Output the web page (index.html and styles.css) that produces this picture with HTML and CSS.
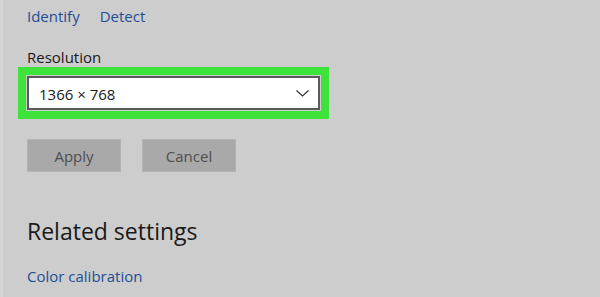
FILE: index.html
```html
<!DOCTYPE html>
<html lang="en">
<head>
  <meta charset="UTF-8">
  <meta name="viewport" content="width=device-width, initial-scale=1.0">
  <link rel="stylesheet" href="styles.css">
  <title>Display settings</title>
</head>
<body>
  <div class="panel">
    <div class="links">
      <a href="#">Identify</a>
      <a href="#">Detect</a>
    </div>

    <p class="label">Resolution</p>
    <div class="select">
      <span>1366 × 768</span>
      <svg class="chevron" width="13" height="7" viewBox="0 0 13 7">
        <polyline points="0.5,0.5 6.5,6 12.5,0.5" fill="none" stroke="#333" stroke-width="1.2"/>
      </svg>
    </div>

    <div class="actions">
      <button class="btn">Apply</button>
      <button class="btn">Cancel</button>
    </div>

    <h2 class="heading">Related settings</h2>
    <a class="related" href="#">Color calibration</a>
  </div>
</body>
</html>
```

FILE: styles.css
```css
body {
  margin: 0;
  background: #cdcdcd;
  font-family: "Open Sans", "Noto Sans", sans-serif;
  color: #1a1a1a;
  height: 297px;
  overflow: hidden;
}
.panel {
  border-left: 3px solid #d5d5d5;
  padding: 6px 0 0 24px;
  height: 291px;
}
a {
  color: #1f4d96;
  text-decoration: none;
}
.links {
  display: flex;
  gap: 20px;
  font-size: 15px;
  line-height: 20px;
}
.label {
  margin: 21px 0 0;
  font-size: 15px;
  line-height: 20px;
}
.select {
  margin-top: 9px;
  width: 293px;
  height: 34px;
  box-sizing: border-box;
  border: 2px solid #5a5a5a;
  background: #fff;
  outline: 8px solid #3de23a;
  outline-offset: 1px;
  display: flex;
  align-items: center;
  justify-content: space-between;
  padding: 0 9px 0 10px;
  font-size: 15px;
}
.select span {
  margin-top: 1px;
}
.actions {
  display: flex;
  gap: 21px;
  margin-top: 29px;
}
.btn {
  width: 94px;
  height: 33px;
  background: #a9a9a9;
  border: 1px solid #b3b3b3;
  color: #4e4e4e;
  font-family: inherit;
  font-size: 15px;
  padding: 0;
}
.heading {
  margin: 44px 0 0;
  font-size: 23px;
  font-weight: normal;
  line-height: 30px;
}
.related {
  display: block;
  margin-top: 20px;
  font-size: 15px;
  line-height: 20px;
}
```
